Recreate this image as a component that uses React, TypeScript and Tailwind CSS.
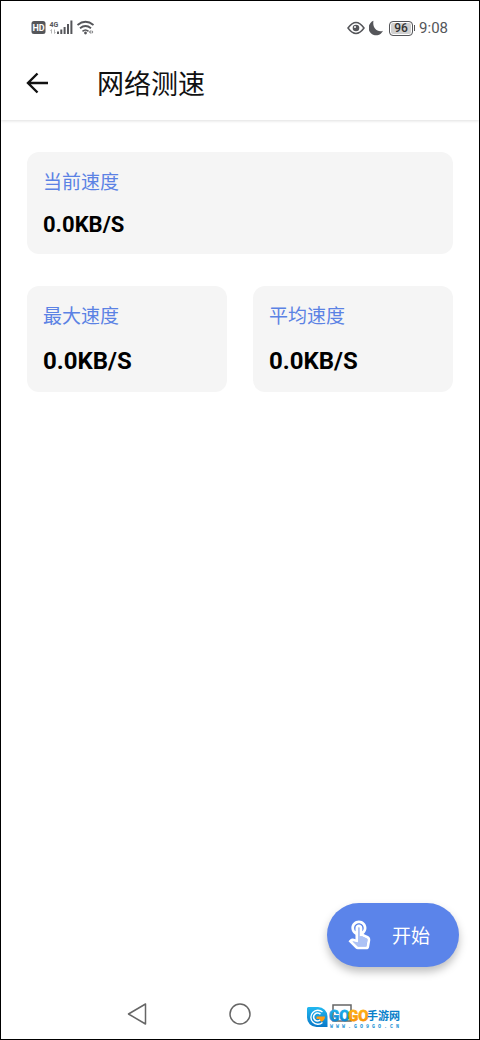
import React from "react";

function StatusBar() {
  return (
    <div className="flex h-[54px] items-center justify-between pr-[31px] pl-[30px] text-[#55565a]">
      <svg width="64" height="18" viewBox="0 0 64 18" fill="currentColor" role="img" aria-label="HD 4G">
        <rect x="0.500" y="2" width="14" height="13" rx="2.500" />
        <g fontFamily="Roboto, sans-serif" fontWeight="700">
          <text x="1.500" y="12" fontSize="9" fill="#fff">HD</text>
          <text x="18.500" y="7.500" fontSize="7">4G</text>
        </g>
        <path d="M20.500 10.500v4M19.300 11.700l1.200-1.200M23.500 10.500v4l1-1.200" stroke="#b8b8b8" strokeWidth="1" fill="none" />
        <path d="M26 12.500h2v2.500h-2zM29.300 10.500h2v4.500h-2zM32.600 8h2v7h-2zM36 5h2v10h-2zM39.400 1.500h2v13.500h-2z" />
        <path d="M46.500 6q8-6.500 16 0M49 9.200q5.500-4.500 11 0" fill="none" stroke="currentColor" strokeWidth="1.800" />
        <path d="M51.500 12.300q3-2.600 6 0" fill="none" stroke="currentColor" strokeWidth="1.600" />
        <circle cx="54.500" cy="14" r="1.400" />
        <path d="M59.700 11v4l-1.800-2zM60.700 11v4l1.600-2z" opacity=".8" />
      </svg>
      <div className="flex items-center gap-1">
        <svg width="18" height="16" viewBox="0 0 18 16" fill="none" stroke="currentColor" strokeWidth="1.500" aria-hidden="true">
          <path d="M1 8q8-11 16 0q-8 11-16 0z" />
          <circle cx="9" cy="8" r="3.300" fill="currentColor" stroke="none" />
          <circle cx="8" cy="7" r="1" fill="#fff" stroke="none" />
        </svg>
        <svg width="16" height="16" viewBox="0 0 16 16" fill="currentColor" aria-hidden="true">
          <path d="M4.500 0.800A7.500 7.500 0 1 0 14 10.800C11 12 8 11 6 8.500C4.400 6.300 3.900 3.500 4.500 0.800z" />
        </svg>
        <div className="flex items-center gap-px">
          <span className="flex h-[15px] w-6 items-center justify-center rounded-[4px] border border-[#55565a] bg-[#d0d0d0] text-[12px] font-medium text-[#333] ring-1 ring-white ring-inset">96</span>
          <span className="h-[6px] w-px bg-[#55565a]" />
        </div>
        <span className="text-[15px]">9:08</span>
      </div>
    </div>
  );
}

function SpeedCard({ label, value, large = false }: { label: string; value: string; large?: boolean }) {
  return (
    <section className="rounded-xl bg-[#f5f5f5] px-4 pt-[17px] pb-[14px]">
      <h2 className="text-[19px] leading-7 text-[#5b82e4]">{label}</h2>
      <p className={large ? "mt-[14px] text-2xl leading-[33px] font-bold text-black" : "mt-3 text-[22px] leading-[31px] font-bold text-black"}>
        {value}
      </p>
    </section>
  );
}

function TouchIcon() {
  return (
    <svg width="33" height="33" viewBox="0 0 24 24" fill="currentColor" aria-hidden="true">
      <path opacity=".5" d="M17.300 14.200l-3.500-1.700h-1.700v-6a.5.5 0 0 0-1 0v10.600l-4.300-.9 3.700 3.700h6.500l.8-4.700c.1-.4-.1-.8-.5-1z" />
      <path d="M18.190 12.440l-3.240-1.620c1.290-1 2.120-2.560 2.120-4.320 0-3.030-2.470-5.500-5.500-5.500s-5.500 2.470-5.500 5.500c0 2.130 1.220 3.980 3 4.890v3.260c-2.150-.46-2.020-.44-2.260-.44-.53 0-1.030.21-1.410.59L4 16.220l5.090 5.090c.43.44 1.030.69 1.650.69h6.300c.98 0 1.810-.7 1.970-1.670l.8-4.710c.22-1.300-.43-2.580-1.620-3.180zm-.35 2.850l-.8 4.710h-6.300c-.09 0-.17-.04-.24-.1l-3.680-3.680 4.250.89V6.500c0-.28.22-.5.5-.5s.5.22.5.5v6h1.760l3.460 1.730c.4.2.62.63.55 1.060zM8.070 6.500c0-1.930 1.570-3.500 3.500-3.500s3.500 1.570 3.500 3.500c0 .95-.38 1.810-1 2.440V6.500c0-1.380-1.120-2.500-2.500-2.500s-2.500 1.120-2.500 2.500v2.440c-.62-.63-1-1.490-1-2.440z" />
    </svg>
  );
}

function SiteLogo() {
  return (
    <svg width="96" height="24" viewBox="0 0 96 24" role="img" aria-label="GOGO手游网">
      <defs>
        <linearGradient id="blue" x1="0" y1="0" x2="0" y2="1">
          <stop offset="0" stopColor="#22b8f0" />
          <stop offset="1" stopColor="#0878c8" />
        </linearGradient>
        <linearGradient id="orange" x1="0" y1="0" x2="0" y2="1">
          <stop offset="0" stopColor="#ffb91c" />
          <stop offset="1" stopColor="#f58a00" />
        </linearGradient>
      </defs>
      <path d="M2.500 1H12a9.500 9.500 0 0 1 9.500 9.500V21H10.500A9.500 9.500 0 0 1 1 11.500V2.500A1.500 1.500 0 0 1 2.500 1z" fill="url(#blue)" />
      <path d="M16.500 6a7 7 0 1 0 0 10.500" fill="none" stroke="#fff" strokeWidth="1.400" />
      <path d="M14.500 8.300a4 4 0 1 0 0 5.500" fill="none" stroke="#fff" strokeWidth="1.600" />
      <path d="M10.500 10.500H19c0 3-1.800 4.800-4 5.300l-1.500-2.800h-3z" fill="#ff9b13" />
      <g fontFamily="Roboto, sans-serif" fontWeight="700" fontSize="15" strokeWidth="0.800">
        <text x="23" y="15" fill="url(#blue)" stroke="url(#blue)">GO</text>
        <text x="42" y="15" fill="url(#orange)" stroke="url(#orange)">GO</text>
      </g>
      <text x="61" y="14" fontFamily="'Noto Sans CJK SC', sans-serif" fontWeight="700" fontSize="11" fill="#087fca">手游网</text>
      <text x="24" y="22" fontFamily="'Liberation Mono', monospace" fontWeight="700" fontSize="5" fill="#1590d4">W W W . G O 9 G O . C N</text>
    </svg>
  );
}

export default function App() {
  return (
    <div className="flex min-h-screen flex-col border border-black bg-white font-[Roboto,'Noto_Sans_CJK_SC',sans-serif]">
      <header className="shadow-[0_1px_3px_rgba(0,0,0,0.13)]">
        <StatusBar />
        <div className="flex h-[65px] items-center gap-12 pb-[10px] pl-6">
          <button type="button" aria-label="返回" className="text-[#111]">
            <svg width="24" height="24" viewBox="0 0 24 24" fill="none" stroke="currentColor" strokeWidth="2.400" aria-hidden="true">
              <path d="M23 12H3M12.500 2.500L3 12l9.500 9.500" />
            </svg>
          </button>
          <h1 className="pt-1 text-[27px] leading-9 text-[#111]">网络测速</h1>
        </div>
      </header>

      <main className="grid grid-cols-2 gap-x-[26px] gap-y-8 px-[26px] pt-8">
        <div className="col-span-2">
          <SpeedCard label="当前速度" value="0.0KB/S" />
        </div>
        <SpeedCard label="最大速度" value="0.0KB/S" large />
        <SpeedCard label="平均速度" value="0.0KB/S" large />
      </main>

      <div className="mt-auto flex justify-end pr-5 pb-[22px]">
        <button type="button" className="flex h-16 items-center gap-4 rounded-full bg-[#5b84ea] pr-[29px] pl-4 text-[19px] text-white shadow-[0_5px_9px_rgba(0,0,0,0.25)]">
          <TouchIcon />
          <span className="pt-1">开始</span>
        </button>
      </div>

      <nav className="flex h-[50px] items-center justify-center gap-[78px] text-[#666]">
        <button type="button" aria-label="返回">
          <svg width="24" height="24" viewBox="0 0 24 24" fill="none" stroke="currentColor" strokeWidth="1.500" strokeLinejoin="round" aria-hidden="true">
            <path d="M19.500 2v20L2.500 12z" />
          </svg>
        </button>
        <button type="button" aria-label="主页">
          <svg width="24" height="24" viewBox="0 0 24 24" fill="none" stroke="currentColor" strokeWidth="1.500" aria-hidden="true">
            <circle cx="12" cy="12" r="10" />
          </svg>
        </button>
        <div className="relative">
          <button type="button" aria-label="最近任务" className="block">
            <svg width="24" height="24" viewBox="0 0 24 24" fill="none" stroke="currentColor" strokeWidth="1.500" aria-hidden="true">
              <rect x="3" y="3" width="18" height="16" />
            </svg>
          </button>
          <div className="absolute top-1 -left-6 w-24">
            <SiteLogo />
          </div>
        </div>
      </nav>
    </div>
  );
}
